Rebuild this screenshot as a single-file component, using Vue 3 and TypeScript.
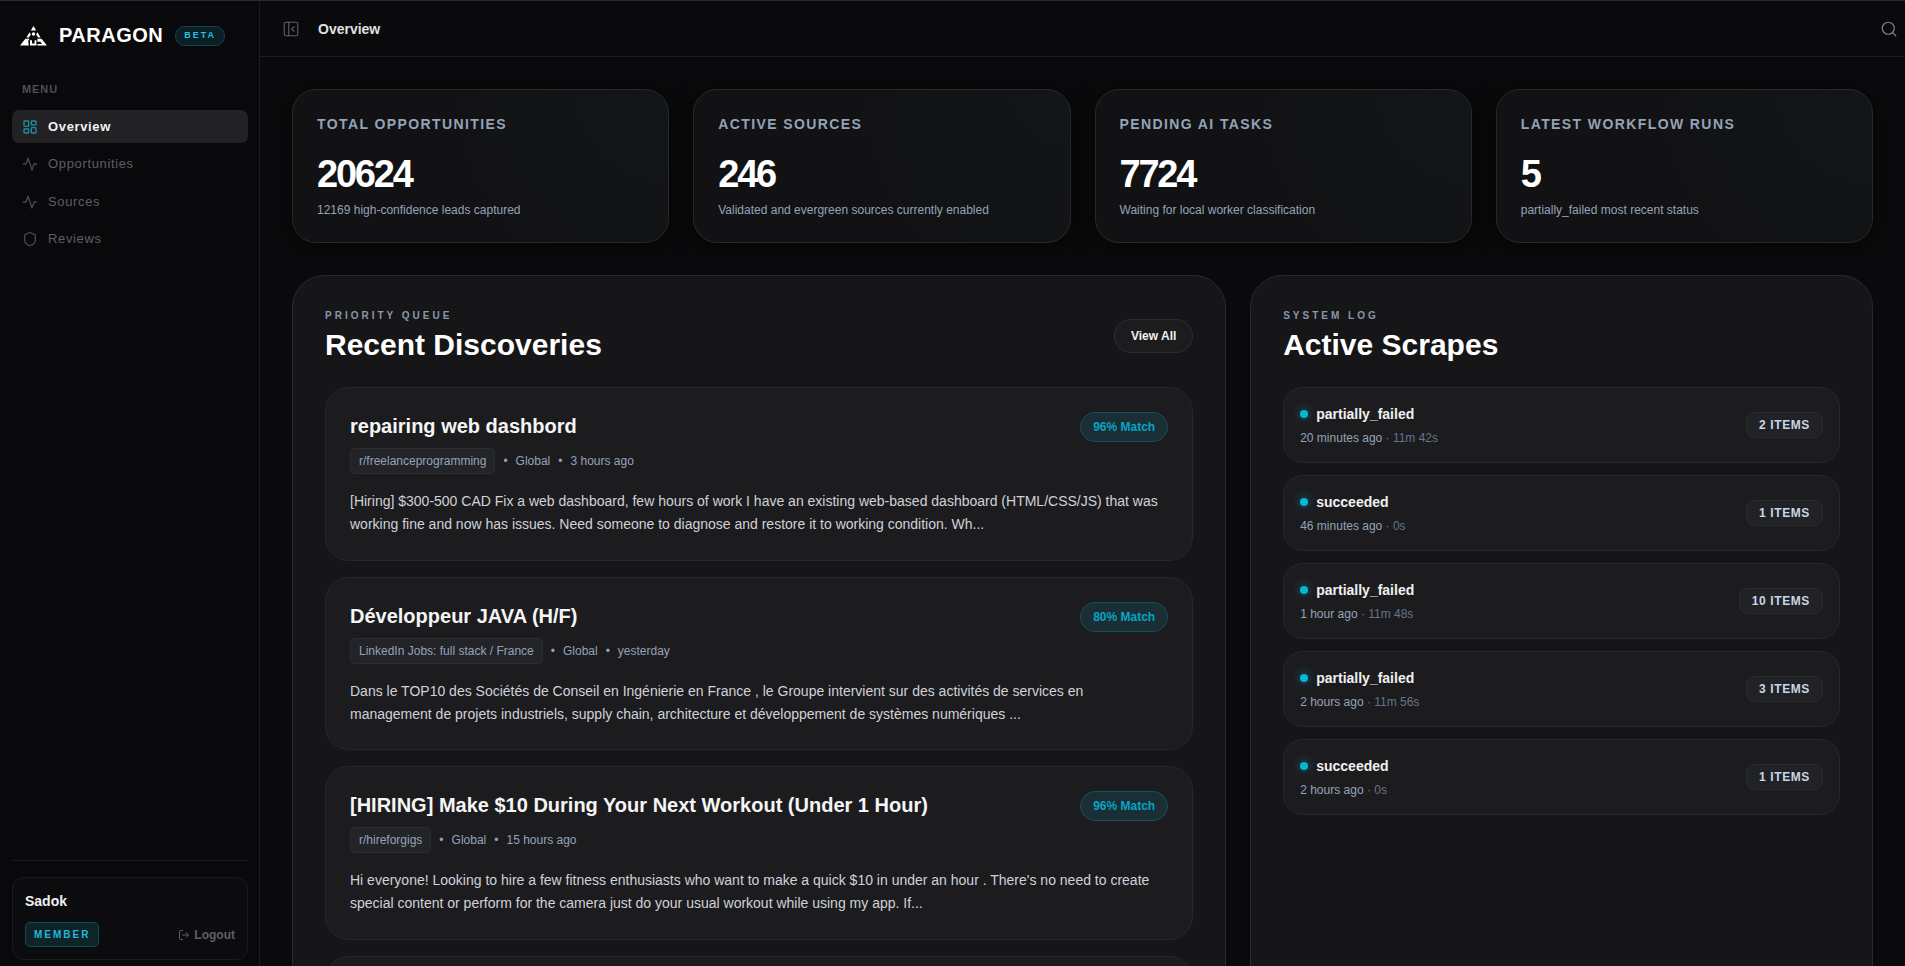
<script setup lang="ts">
interface Stat { label: string; value: string; note: string }
interface Job { title: string; match: number; tag: string; when: string; body: string }
interface Scrape { status: string; ago: string; dur: string; items: number }

const stats: Stat[] = [
  { label: 'TOTAL OPPORTUNITIES', value: '20624', note: '12169 high-confidence leads captured' },
  { label: 'ACTIVE SOURCES', value: '246', note: 'Validated and evergreen sources currently enabled' },
  { label: 'PENDING AI TASKS', value: '7724', note: 'Waiting for local worker classification' },
  { label: 'LATEST WORKFLOW RUNS', value: '5', note: 'partially_failed most recent status' },
]
const jobs: Job[] = [
  { title: 'repairing web dashbord', match: 96, tag: 'r/freelanceprogramming', when: '3 hours ago', body: '[Hiring] $300-500 CAD Fix a web dashboard, few hours of work I have an existing web-based dashboard (HTML/CSS/JS) that was working fine and now has issues. Need someone to diagnose and restore it to working condition. Wh...' },
  { title: 'Développeur JAVA (H/F)', match: 80, tag: 'LinkedIn Jobs: full stack / France', when: 'yesterday', body: 'Dans le TOP10 des Sociétés de Conseil en Ingénierie en France , le Groupe intervient sur des activités de services en management de projets industriels, supply chain, architecture et développement de systèmes numériques ...' },
  { title: '[HIRING] Make $10 During Your Next Workout (Under 1 Hour)', match: 96, tag: 'r/hireforgigs', when: '15 hours ago', body: "Hi everyone! Looking to hire a few fitness enthusiasts who want to make a quick $10 in under an hour . There's no need to create special content or perform for the camera just do your usual workout while using my app. If..." },
]
const scrapes: Scrape[] = [
  { status: 'partially_failed', ago: '20 minutes ago', dur: '11m 42s', items: 2 },
  { status: 'succeeded', ago: '46 minutes ago', dur: '0s', items: 1 },
  { status: 'partially_failed', ago: '1 hour ago', dur: '11m 48s', items: 10 },
  { status: 'partially_failed', ago: '2 hours ago', dur: '11m 56s', items: 3 },
  { status: 'succeeded', ago: '2 hours ago', dur: '0s', items: 1 },
]
</script>

<template>
  <div class="shell">
    <aside class="sidebar">
      <div class="brand">
        <svg class="logo" viewBox="0 0 27 20" width="27" height="20" fill="#fff">
          <path d="M13.5 0 16.2 4.6H10.8Z" />
          <circle cx="13.5" cy="8" r="1.7" />
          <path d="M9.6 6.2 10.9 8.4 8.8 11.4H6.4ZM17.4 6.2 20.6 11.4H18.2L16.1 8.4Z" />
          <path d="M5.4 12.8H9.6L8.2 15 8.8 19.6H0ZM10 14.2H12V17.6H14.6V14.2H16.4V19.6H10ZM17.4 12.8H21.5L27 19.6H17.4V18H22L20.4 15.8H17.4Z" />
        </svg>
        <span class="wordmark">PARAGON</span>
        <span class="beta">BETA</span>
      </div>
      <div class="menu-label">MENU</div>
      <nav class="nav">
        <a class="nav-item active">
          <svg class="nav-icon" viewBox="0 0 24 24"><rect x="3" y="3" width="7" height="8" rx="1" /><rect x="14" y="3" width="7" height="6" rx="1" /><rect x="3" y="15" width="7" height="6" rx="1" /><rect x="14" y="13" width="7" height="8" rx="1" /></svg>
          Overview
        </a>
        <a class="nav-item">
          <svg class="nav-icon" viewBox="0 0 24 24"><path d="M22 12h-4l-3 9L9 3l-3 9H2" /></svg>
          Opportunities
        </a>
        <a class="nav-item">
          <svg class="nav-icon" viewBox="0 0 24 24"><path d="M22 12h-4l-3 9L9 3l-3 9H2" /></svg>
          Sources
        </a>
        <a class="nav-item">
          <svg class="nav-icon" viewBox="0 0 24 24"><path d="M20 13c0 5-3.5 7.5-7.66 8.95a1 1 0 0 1-.67-.01C7.5 20.5 4 18 4 13V6a1 1 0 0 1 1-1c2 0 4.5-1.2 6.24-2.72a1.17 1.17 0 0 1 1.52 0C14.51 3.81 17 5 19 5a1 1 0 0 1 1 1z" /></svg>
          Reviews
        </a>
      </nav>
      <div class="side-foot">
        <div class="user-card">
          <div class="user-name">Sadok</div>
          <div class="user-row">
            <span class="member">MEMBER</span>
            <a class="logout">
              <svg class="logout-icon" viewBox="0 0 24 24"><path d="M9 21H5a2 2 0 0 1-2-2V5a2 2 0 0 1 2-2h4" /><path d="m16 17 5-5-5-5" /><path d="M21 12H9" /></svg>
              Logout
            </a>
          </div>
        </div>
      </div>
    </aside>

    <div class="content">
      <header class="topbar">
        <svg class="toggle" viewBox="0 0 24 24"><rect x="3" y="3" width="18" height="18" rx="2" /><path d="M9 3v18" /><path d="m16 15-3-3 3-3" /></svg>
        <span class="crumb">Overview</span>
        <svg class="search" viewBox="0 0 24 24"><circle cx="11" cy="11" r="8" /><path d="m21 21-4.3-4.3" /></svg>
      </header>

      <main class="main">
        <section class="stats">
          <div v-for="s in stats" :key="s.label" class="stat">
            <div class="stat-label">{{ s.label }}</div>
            <div class="stat-value">{{ s.value }}</div>
            <div class="stat-note">{{ s.note }}</div>
          </div>
        </section>

        <section class="panels">
          <div class="panel">
            <div class="panel-head">
              <div>
                <div class="overline">PRIORITY QUEUE</div>
                <h2 class="panel-title">Recent Discoveries</h2>
              </div>
              <button class="view-all">View All</button>
            </div>
            <div class="job-list">
              <article v-for="j in jobs" :key="j.title" class="job">
                <div class="job-top">
                  <div>
                    <h3 class="job-title">{{ j.title }}</h3>
                    <div class="job-meta">
                      <span class="tag">{{ j.tag }}</span>
                      <span class="sep">•</span>
                      <span>Global</span>
                      <span class="sep">•</span>
                      <span>{{ j.when }}</span>
                    </div>
                  </div>
                  <span class="match">{{ j.match }}% Match</span>
                </div>
                <p class="job-body">{{ j.body }}</p>
              </article>
              <article class="job"></article>
            </div>
          </div>

          <div class="panel">
            <div class="panel-head">
              <div>
                <div class="overline">SYSTEM LOG</div>
                <h2 class="panel-title">Active Scrapes</h2>
              </div>
            </div>
            <div class="scrape-list">
              <div v-for="(r, i) in scrapes" :key="i" class="scrape">
                <div>
                  <div class="scrape-status"><span class="dot"></span>{{ r.status }}</div>
                  <div class="scrape-time">{{ r.ago }} <span class="dim">· {{ r.dur }}</span></div>
                </div>
                <span class="items">{{ r.items }} ITEMS</span>
              </div>
            </div>
          </div>
        </section>
      </main>
    </div>
  </div>
</template>

<style>
html, body { margin: 0; height: 100%; overflow: hidden; background: #0a0a0c; }
</style>

<style scoped>
.shell {
  display: flex;
  height: 966px;
  box-sizing: border-box;
  border-top: 1px solid #2c2c2e;
  background: #08080a;
  font-family: "Liberation Sans", Arial, sans-serif;
  color: #fff;
  overflow: hidden;
}
.sidebar {
  width: 260px;
  flex: none;
  box-sizing: border-box;
  border-right: 1px solid #1c1c1f;
  background: #09090b;
  padding: 0 11px 6px 12px;
  display: flex;
  flex-direction: column;
}
.brand { display: flex; align-items: center; height: 69px; padding-left: 8px; }
.logo { flex: none; margin-top: 1px; }
.wordmark { margin-left: 12px; font-size: 20px; font-weight: 700; letter-spacing: 0.5px; }
.beta {
  margin-left: 12px;
  padding: 0 8px;
  height: 20px;
  line-height: 17px;
  box-sizing: border-box;
  border: 1px solid #0f4650;
  border-radius: 10px;
  background: #0a1f25;
  color: #22c3e0;
  font-size: 9px;
  font-weight: 700;
  letter-spacing: 2px;
}
.menu-label {
  margin-top: 13px;
  padding-left: 10px;
  font-size: 11px;
  font-weight: 700;
  letter-spacing: 0.9px;
  color: #4e4f55;
}
.nav { margin-top: 15px; display: flex; flex-direction: column; gap: 4px; }
.nav-item {
  display: flex;
  align-items: center;
  gap: 10px;
  padding: 7px 10px;
  line-height: 19.4px;
  font-size: 13px;
  letter-spacing: 0.65px;
  color: #5e5f66;
  border-radius: 7px;
}
.nav-item.active { background: #222224; color: #f2f2f2; font-weight: 700; }
.nav-icon {
  width: 16px;
  height: 16px;
  flex: none;
  fill: none;
  stroke: #47484e;
  stroke-width: 2;
  stroke-linecap: round;
  stroke-linejoin: round;
}
.active .nav-icon { stroke: #1f8da3; }
.side-foot { margin-top: auto; border-top: 1px solid #1c1c1f; padding-top: 16px; }
.user-card {
  box-sizing: border-box;
  height: 83px;
  padding: 13px 12px;
  border: 1px solid #1c1c1f;
  border-radius: 12px;
  background: #0c0c0e;
}
.user-name { font-size: 14px; font-weight: 700; line-height: 20px; color: #f0f0f0; }
.user-row { margin-top: 11px; display: flex; align-items: center; justify-content: space-between; }
.member {
  box-sizing: border-box;
  height: 25px;
  line-height: 23px;
  padding: 0 8px;
  border: 1px solid #114a54;
  border-radius: 5px;
  background: #0f2428;
  color: #22b8d4;
  font-size: 10px;
  font-weight: 700;
  letter-spacing: 2px;
}
.logout { display: flex; align-items: center; gap: 4px; font-size: 12px; font-weight: 700; color: #5e5f66; }
.logout-icon { width: 12px; height: 12px; fill: none; stroke: #5e5f66; stroke-width: 2; stroke-linecap: round; stroke-linejoin: round; }

.content { flex: 1; min-width: 0; display: flex; flex-direction: column; }
.topbar {
  flex: none;
  height: 56px;
  box-sizing: border-box;
  border-bottom: 1px solid #1c1c1f;
  background: #0a0a0c;
  display: flex;
  align-items: center;
  padding: 0 7px 0 22px;
}
.toggle { width: 18px; height: 18px; fill: none; stroke: #5e5f66; stroke-width: 1.5; stroke-linecap: round; stroke-linejoin: round; }
.crumb { margin-left: 18px; font-size: 14px; font-weight: 700; color: #e0e0e0; }
.search { margin-left: auto; width: 18px; height: 18px; fill: none; stroke: #808187; stroke-width: 1.6; stroke-linecap: round; }

.main { flex: 1; min-height: 0; overflow: hidden; padding: 32px; background: #0a0a0c; }
.stats { display: grid; grid-template-columns: repeat(4, 1fr); gap: 24px; }
.stat {
  box-sizing: border-box;
  height: 154px;
  padding: 24px;
  border: 1px solid #28282b;
  border-radius: 24px;
  background:
    radial-gradient(circle at 100% 0%, rgba(20, 60, 60, 0.1), transparent 55%),
    #121214;
  box-shadow: 0 4px 20px rgba(0, 0, 0, 0.5);
}
.stat-label { font-size: 14px; font-weight: 700; letter-spacing: 1.4px; line-height: 20px; color: #94a3b8; }
.stat-value { margin-top: 18px; font-size: 38px; font-weight: 700; letter-spacing: -2.2px; line-height: 44px; }
.stat-note { margin-top: 5px; font-size: 12px; line-height: 18px; color: #94a3b8; }

.panels { margin-top: 32px; display: grid; grid-template-columns: 3fr 2fr; gap: 24px; }
.panel {
  box-sizing: border-box;
  height: 1000px;
  padding: 32px;
  border: 1px solid #2a2a2c;
  border-radius: 32px;
  background: #161618;
}
.panel-head { display: flex; align-items: center; justify-content: space-between; height: 55px; margin-bottom: 24px; }
.overline { font-size: 10px; font-weight: 700; letter-spacing: 3px; line-height: 15px; color: #8b96a9; }
.panel-title { margin: 4px 0 0; font-size: 30px; font-weight: 700; line-height: 36px; color: #fff; }
.view-all {
  font-family: inherit;
  width: 79px;
  height: 34px;
  border: 1px solid #2e2e31;
  border-radius: 17px;
  background: #1c1c1f;
  color: #f0f0f0;
  font-size: 12px;
  font-weight: 700;
  padding: 0;
}
.job-list { display: flex; flex-direction: column; gap: 16px; }
.job {
  box-sizing: border-box;
  height: 173.5px;
  padding: 24px;
  border: 1px solid #28282b;
  border-radius: 24px;
  background: #1c1c1f;
}
.job-top { display: flex; justify-content: space-between; align-items: flex-start; }
.job-title { margin: 0; font-size: 20px; font-weight: 700; line-height: 28px; color: #f5f5f5; }
.job-meta { margin-top: 8px; display: flex; align-items: center; font-size: 12px; color: #94a3b8; }
.tag {
  box-sizing: border-box;
  height: 26px;
  line-height: 24px;
  padding: 0 8px;
  border: 1px solid #2c2d31;
  border-radius: 5px;
  background: #232428;
}
.sep { margin: 0 8px; }
.match {
  box-sizing: border-box;
  height: 30px;
  line-height: 28px;
  padding: 0 12px;
  border: 1px solid #14505f;
  border-radius: 15px;
  background: #1a2e35;
  color: #08a4c4;
  font-size: 12px;
  font-weight: 700;
}
.job-body { margin: 16px 0 0; font-size: 14px; line-height: 23px; color: #d0d2d8; }

.scrape-list { display: flex; flex-direction: column; gap: 12px; }
.scrape {
  box-sizing: border-box;
  height: 76px;
  padding: 0 16px;
  border: 1px solid #28282b;
  border-radius: 20px;
  background: #1c1c1f;
  display: flex;
  align-items: center;
  justify-content: space-between;
}
.scrape-status { display: flex; align-items: center; font-size: 14px; font-weight: 700; line-height: 20px; color: #f0f0f0; }
.dot {
  width: 8px;
  height: 8px;
  margin-right: 8px;
  border-radius: 50%;
  background: #06b6d4;
  box-shadow: 0 0 8px rgba(6, 182, 212, 0.6);
}
.scrape-time { margin-top: 5px; font-size: 12px; line-height: 18px; color: #94a3b8; }
.dim { color: #64748b; }
.items {
  box-sizing: border-box;
  height: 26px;
  line-height: 24px;
  padding: 0 12px;
  border: 1px solid #2a2b2f;
  border-radius: 8px;
  background: #212226;
  color: #cbd5e1;
  font-size: 12px;
  font-weight: 700;
  letter-spacing: 0.6px;
}
</style>
